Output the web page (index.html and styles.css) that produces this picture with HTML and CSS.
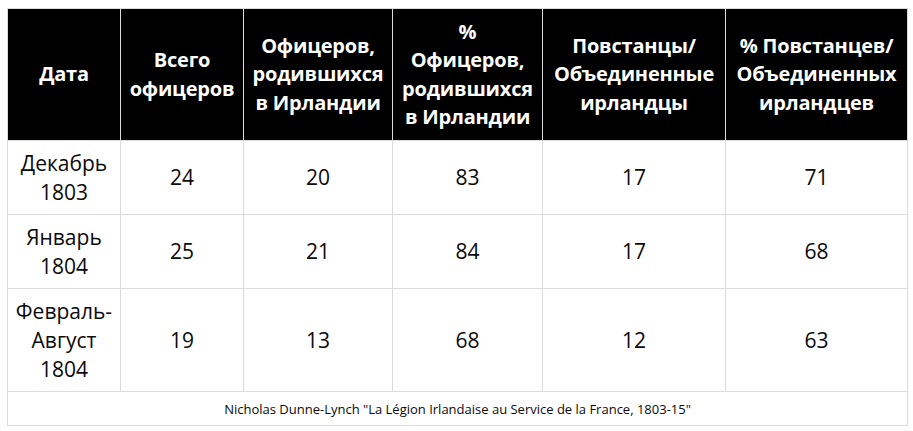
FILE: index.html
```html
<!DOCTYPE html>
<html lang="ru">
<head>
<meta charset="utf-8">
<title>Ирландский легион</title>
<link rel="stylesheet" href="styles.css">
</head>
<body>
<table class="data">
  <colgroup>
    <col class="c1"><col class="c2"><col class="c3"><col class="c4"><col class="c5"><col class="c6">
  </colgroup>
  <thead>
    <tr class="head">
      <th>Дата</th>
      <th>Всего<br>офицеров</th>
      <th>Офицеров,<br>родившихся<br>в Ирландии</th>
      <th>%<br>Офицеров,<br>родившихся<br>в Ирландии</th>
      <th>Повстанцы/<br>Объединенные<br>ирландцы</th>
      <th>% Повстанцев/<br>Объединенных<br>ирландцев</th>
    </tr>
  </thead>
  <tbody>
    <tr class="row2">
      <td>Декабрь<br>1803</td><td>24</td><td>20</td><td>83</td><td>17</td><td>71</td>
    </tr>
    <tr class="row2">
      <td>Январь<br>1804</td><td>25</td><td>21</td><td>84</td><td>17</td><td>68</td>
    </tr>
    <tr class="row3">
      <td>Февраль-<br>Август<br>1804</td><td>19</td><td>13</td><td>68</td><td>12</td><td>63</td>
    </tr>
    <tr class="source">
      <td colspan="6">Nicholas Dunne-Lynch "La Légion Irlandaise au Service de la France, 1803-15"</td>
    </tr>
  </tbody>
</table>
</body>
</html>
```
FILE: styles.css
```css
html, body {
  margin: 0;
  background: #ffffff;
}
body {
  padding: 8px 6px 0 7px;
  font-family: "Open Sans", "Noto Sans", sans-serif;
  color: #111;
}
.data {
  border-collapse: collapse;
  table-layout: fixed;
  width: 900px;
  border: 1px solid #dcdcdc;
}
.c1 { width: 113px; }
.c2 { width: 123px; }
.c3 { width: 149px; }
.c4 { width: 150px; }
.c5 { width: 183px; }
.c6 { width: 182px; }
.data th,
.data td {
  border: 1px solid #dcdcdc;
  text-align: center;
  vertical-align: middle;
  padding: 0 1px;
}
.head th {
  background: #000;
  color: #fff;
  font-weight: 700;
  font-size: 20px;
  line-height: 28.5px;
  height: 131px;
  letter-spacing: -0.2px;
}
.data tbody td {
  font-size: 21px;
  line-height: 29px;
  color: #0a0a0a;
}
.row2 td { height: 73px; }
.row3 td { height: 102px; }
.source td {
  font-size: 13px !important;
  line-height: 18px !important;
  height: 33px;
}
```
